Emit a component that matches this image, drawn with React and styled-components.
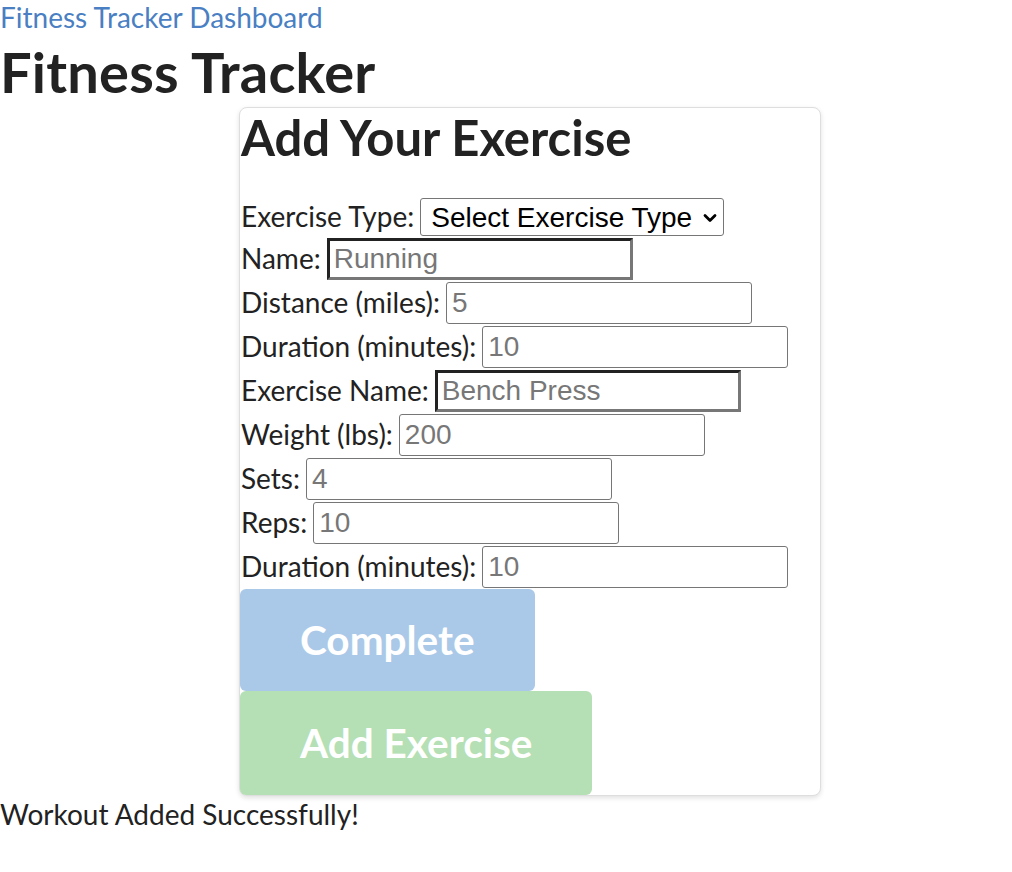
import React from "react";
import styled, { createGlobalStyle } from "styled-components";

const Global = createGlobalStyle`
  html, body { margin: 0; padding: 0; background: #fff; }
  body {
    font-family: Lato, "Open Sans", sans-serif;
    font-size: 28px;
    color: #222;
  }
`;

const Page = styled.div`
  display: flex;
  flex-direction: column;
  align-items: flex-start;
`;

const NavLink = styled.a`
  display: block;
  color: #4a7fc3;
  text-decoration: none;
  line-height: 35px;
`;

const Title = styled.h1`
  margin: 3px 0 2px;
  font-size: 56px;
  line-height: 1.2;
  font-weight: 700;
  letter-spacing: 0.2px;
`;

const Card = styled.div`
  box-sizing: border-box;
  width: 582px;
  margin-left: 239px;
  border: 1px solid #dedede;
  border-radius: 8px;
  box-shadow: 0 2px 5px rgba(0, 0, 0, 0.12);
  background: #fff;
  display: flex;
  flex-direction: column;
  align-items: flex-start;
`;

const CardTitle = styled.h2`
  margin: 5px 0 35px 1px;
  font-size: 49px;
  line-height: 49px;
  font-weight: 700;
`;

const Row = styled.div`
  display: flex;
  align-items: center;
  gap: 6px;
  height: ${(p) => (p.$short ? 40 : 44)}px;
  padding-left: 1px;
`;

const Label = styled.label`
  white-space: nowrap;
  line-height: 1;
  padding-bottom: 2px;
`;

const Input = styled.input`
  box-sizing: border-box;
  width: 306px;
  height: 42px;
  padding: 0 5px;
  font-family: "Liberation Sans", Arial, sans-serif;
  font-size: 28px;
  color: #222;
  background: #fff;
  border: 1px solid #767676;
  border-radius: 3px;
  outline: none;
  ${(p) =>
    p.$inset &&
    `
    border-width: 3px;
    border-color: #222 #777 #777 #222;
    border-radius: 0;
    padding: 0 4px;
  `}
  &::placeholder { color: #777; }
`;

const SelectWrap = styled.span`
  position: relative;
  display: inline-flex;
`;

const Select = styled.select`
  appearance: none;
  box-sizing: border-box;
  width: 304px;
  height: 38px;
  padding: 0 30px 0 10px;
  font-family: "Liberation Sans", Arial, sans-serif;
  font-size: 28px;
  color: #000;
  background: #fff;
  border: 1px solid #767676;
  border-radius: 3px;
  outline: none;
`;

const Chevron = styled.svg`
  position: absolute;
  right: 6px;
  top: 50%;
  width: 16px;
  height: 11px;
  margin-top: -4px;
  pointer-events: none;
`;

const Button = styled.button`
  box-sizing: border-box;
  height: ${(p) => p.$h}px;
  padding: 0 60px;
  border: none;
  border-radius: 6px;
  background: ${(p) => p.$bg};
  color: #fff;
  font-family: Lato, sans-serif;
  font-size: 40.5px;
  font-weight: 700;
  line-height: 1.2;
  cursor: pointer;
`;

const Message = styled.p`
  margin: 2px 0 0;
  line-height: 1.2;
`;

const fields = [
  { label: "Name:", ph: "Running", inset: true },
  { label: "Distance (miles):", ph: "5" },
  { label: "Duration (minutes):", ph: "10" },
  { label: "Exercise Name:", ph: "Bench Press", inset: true },
  { label: "Weight (lbs):", ph: "200" },
  { label: "Sets:", ph: "4" },
  { label: "Reps:", ph: "10" },
  { label: "Duration (minutes):", ph: "10" },
];

export default function App() {
  return (
    <Page>
      <Global />
      <NavLink href="#">Fitness Tracker Dashboard</NavLink>
      <Title>Fitness Tracker</Title>
      <Card>
        <CardTitle>Add Your Exercise</CardTitle>
        <Row $short>
          <Label>Exercise Type:</Label>
          <SelectWrap>
            <Select defaultValue="">
              <option value="">Select Exercise Type</option>
              <option value="cardio">Cardio</option>
              <option value="strength">Strength</option>
            </Select>
            <Chevron viewBox="0 0 16 11">
              <polyline
                points="3,2.5 8,7.5 13,2.5"
                fill="none"
                stroke="#000"
                strokeWidth="2.8"
                strokeLinecap="round"
                strokeLinejoin="round"
              />
            </Chevron>
          </SelectWrap>
        </Row>
        {fields.map((f, i) => (
          <Row key={i}>
            <Label>{f.label}</Label>
            <Input type="text" placeholder={f.ph} $inset={f.inset} />
          </Row>
        ))}
        <Button $bg="#aac9e8" $h={102}>Complete</Button>
        <Button $bg="#b5dfb4" $h={104}>Add Exercise</Button>
      </Card>
      <Message>Workout Added Successfully!</Message>
    </Page>
  );
}
